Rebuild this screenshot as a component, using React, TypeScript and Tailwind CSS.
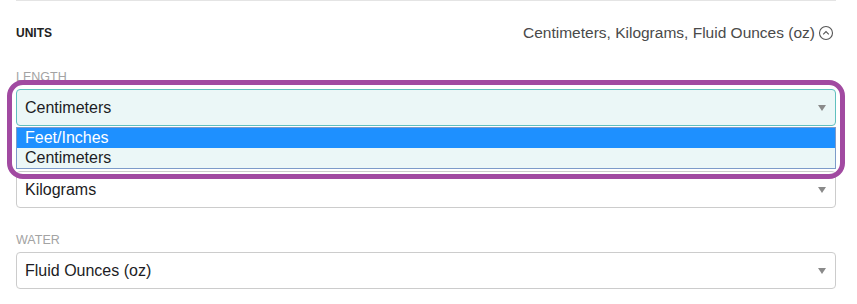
import React from 'react';

type Field = { label: string; value: string; active?: boolean; hidden?: boolean };

const fields: Field[] = [
  { label: 'Length', value: 'Centimeters', active: true },
  { label: 'Weight', value: 'Kilograms', hidden: true },
  { label: 'Water', value: 'Fluid Ounces (oz)' },
];

const Caret = () => (
  <svg width="8" height="6" viewBox="0 0 8 6" className="shrink-0">
    <path d="M0 0 H8 L4 6 Z" fill="#8a8a8a" />
  </svg>
);

const SelectBox = ({ field }: { field: Field }) => (
  <div
    className={
      field.active
        ? 'flex h-[37px] items-center justify-between rounded-[4px] border border-[#5fc0bf] bg-[#ebf7f7] pl-[8px] pr-[9px]'
        : 'flex h-[37px] items-center justify-between rounded-[4px] border border-[#cccccc] bg-white pl-[8px] pr-[9px]'
    }
  >
    <span className="text-[16px] text-[#1c1c24]">{field.value}</span>
    <Caret />
  </div>
);

export default function App() {
  return (
    <div className="relative h-[304px] w-[857px] overflow-hidden bg-white font-['Liberation_Sans',Arial,sans-serif]">
      <div className="ml-4 w-[820px] border-t border-[#e4e4e4]">
        <div className="mt-[21px] flex h-[22px] items-center justify-between">
          <span className="text-[12px] font-bold uppercase text-[#222]">Units</span>
          <div className="flex items-center gap-[3px]">
            <span className="text-[15.5px] text-[#4a4a4a]">Centimeters, Kilograms, Fluid Ounces (oz)</span>
            <svg width="16" height="16" viewBox="0 0 16 16" className="mr-[2px]">
              <circle cx="8" cy="8" r="6.5" fill="none" stroke="#555" strokeWidth="1.1" />
              <path d="M5.2 9.3 L8 6.5 L10.8 9.3" fill="none" stroke="#555" strokeWidth="1.1" />
            </svg>
          </div>
        </div>

        {fields.map((f, i) => (
          <div key={f.label} className={i === 2 ? 'mt-[24px]' : 'mt-[25px]'}>
            <div className="mb-[4px] h-[16px] text-[12.5px] uppercase leading-[16px] text-[#a3a3a3]">
              {f.hidden ? null : f.label}
            </div>
            <SelectBox field={f} />
          </div>
        ))}
      </div>

      {/* open options list of the length select */}
      <div className="absolute left-4 top-[127px] w-[820px] border border-[#7d9bc9] bg-[#ebf7f7] text-[16px] leading-[20px]">
        <div className="bg-[#1e90ff] pl-[8px] text-white">Feet/Inches</div>
        <div className="pl-[8px] text-[#1c1c24]">Centimeters</div>
      </div>

      {/* highlight annotation */}
      <div className="pointer-events-none absolute left-[7px] top-[80px] h-[99px] w-[838px] rounded-[16px] border-[5px] border-[#a14aa1]" />
    </div>
  );
}
